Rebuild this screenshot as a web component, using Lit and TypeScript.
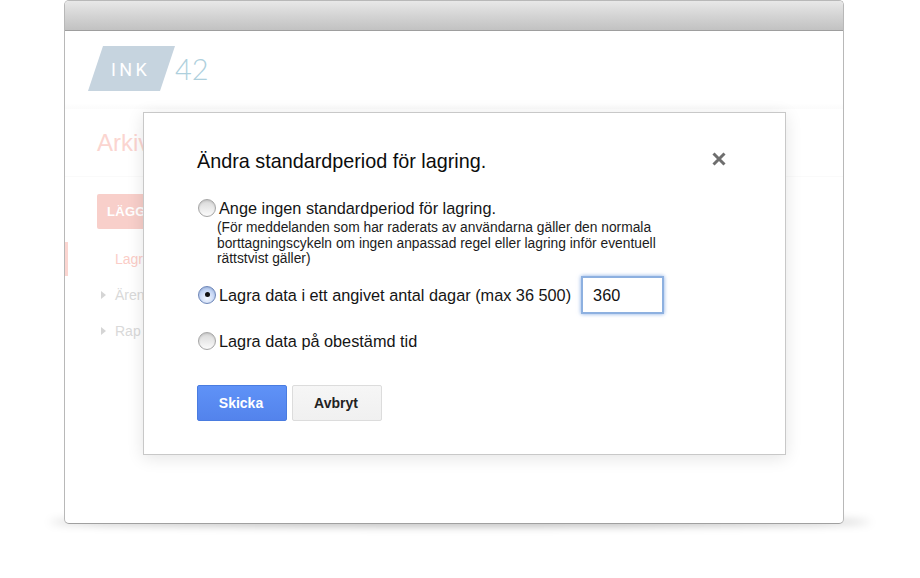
import { LitElement, html, css } from "lit";
import { customElement } from "lit/decorators.js";

@customElement("app-root")
export class AppRoot extends LitElement {
  static styles = css`
    :host { display: block; width: 920px; height: 578px; background: #fff; overflow: hidden; font-family: "Liberation Sans", Arial, sans-serif; color: #111; }
    .stage { position: relative; width: 920px; height: 578px; padding: 0 76px 0 64px; box-sizing: border-box; }
    .floor { position: absolute; left: 50px; right: 50px; top: 518px; height: 8px; border-radius: 50%; background: rgba(0,0,0,.3); filter: blur(4px); }
    .win { position: relative; height: 524px; box-sizing: border-box; background: #fff; border: 1px solid #b8b8b8; border-bottom-color: #a0a0a0; border-radius: 5px; overflow: hidden; display: flex; flex-direction: column; }
    .titlebar { height: 30px; flex: none; box-sizing: border-box; border-bottom: 1px solid #9e9e9e; background: linear-gradient(#e8e8e8, #d4d4d4 50%, #c2c2c2); }
    .header { height: 72px; flex: none; padding: 15px 0 0 23px; box-sizing: border-box; display: flex; align-items: flex-start; }
    .logo-box { width: 87px; height: 45px; background: #c6d4df; clip-path: polygon(15px 0, 100% 0, 72px 100%, 0 100%); display: flex; align-items: center; padding: 2px 0 0 23px; box-sizing: border-box; color: #fff; font: 400 18px Roboto, sans-serif; letter-spacing: 3.4px; }
    .logo-num { margin-top: 6px; color: #aed0dd; font: 300 29px/34px Lato, sans-serif; }
    .band { height: 6px; flex: none; background: linear-gradient(#fff, #fbfbfb); }
    .page { flex: 1; display: flex; flex-direction: column; }
    .page-title { height: 68px; flex: none; box-sizing: border-box; border-bottom: 1px solid #fafafa; padding: 20px 0 0 32px; font-size: 24px; line-height: 28px; color: #fbd5d0; }
    .add { margin: 17px 0 0 32px; width: 120px; height: 35px; border-radius: 2px; background: #f8cfca; color: #fff; font-size: 13px; font-weight: 700; line-height: 35px; padding-left: 10px; box-sizing: border-box; letter-spacing: .3px; }
    .nav { margin-top: 13px; display: flex; flex-direction: column; font-size: 14px; }
    .nav-item { height: 36px; line-height: 34px; display: flex; align-items: center; color: #d9d9d9; }
    .nav-item.on { height: 34px; margin-bottom: 1px; border-left: 3px solid #fbd5d0; color: #fbcdc7; padding-left: 47px; }
    .arrow { width: 0; height: 0; margin: 0 9px 0 36px; border-left: 5px solid #d5d5d5; border-top: 4px solid transparent; border-bottom: 4px solid transparent; }
    .modal { position: absolute; left: 143px; top: 112px; width: 643px; height: 343px; box-sizing: border-box; background: #fff; border: 1px solid #c8c8c8; box-shadow: 0 3px 16px rgba(0,0,0,.11); padding: 37px 53px 0; }
    .close { position: absolute; left: 567px; top: 38px; width: 16px; height: 16px; display: block; }
    h1 { margin: 0 0 26px; font-size: 19.8px; font-weight: 400; line-height: 22px; color: #0c0c0c; }
    .opt { display: flex; align-items: center; gap: 3px; font-size: 16.3px; line-height: 20px; color: #151515; height: 20px; margin-left: 1px; }
    .radio { width: 18px; height: 18px; flex: none; box-sizing: border-box; border-radius: 50%; border: 1px solid #a5a5a5; background: linear-gradient(#d8d8d8, #fbfbfb); box-shadow: inset 0 1px 2px rgba(0,0,0,.12); display: flex; align-items: center; justify-content: center; }
    .radio.on { border-color: #6d86b8; background: radial-gradient(circle at 50% 70%, #f4f8ff, #a9c2ef 90%); }
    .dot { width: 5px; height: 5px; border-radius: 50%; background: #111; }
    .note { margin: 2px 0 0 20px; font-size: 13.8px; line-height: 15.5px; color: #1c1c1c; width: 470px; }
    .row2 { margin-top: 9px; height: 38px; }
    .row3 { margin-top: 17px; }
    .input { width: 83px; height: 38px; margin-left: 7px; box-sizing: border-box; border: 2px solid #8db0e0; box-shadow: 0 0 4px rgba(90,140,220,.75); padding-left: 10px; font-size: 16.3px; line-height: 34px; color: #111; background: #fff; }
    .actions { display: flex; gap: 5px; margin-top: 34px; }
    .btn { width: 90px; height: 36px; box-sizing: border-box; border-radius: 2px; font-size: 14px; font-weight: 700; line-height: 34px; text-align: center; padding-right: 2px; }
    .primary { background: linear-gradient(#5f92f7, #5383ec); border: 1px solid #4a7ce0; color: #fff; }
    .secondary { background: linear-gradient(#f6f6f6, #f0f0f0); border: 1px solid #dcdcdc; color: #222; }
  `;

  render() {
    return html`
      <div class="stage">
        <div class="floor"></div>
        <div class="win">
          <div class="titlebar"></div>
          <div class="header">
            <div class="logo-box">INK</div>
            <div class="logo-num">42</div>
          </div>
          <div class="band"></div>
          <div class="page">
            <div class="page-title">Arkiv</div>
            <div class="add">LÄGG</div>
            <div class="nav">
              <div class="nav-item on">Lagr</div>
              <div class="nav-item"><span class="arrow"></span>Ären</div>
              <div class="nav-item"><span class="arrow"></span>Rap</div>
            </div>
          </div>
        </div>
        <div class="modal">
          <svg class="close" viewBox="0 0 16 16"><path d="M2.5 2.5 13.5 13.5M13.5 2.5 2.5 13.5" stroke="#6e6e6e" stroke-width="3" fill="none"/></svg>
          <h1>Ändra standardperiod för lagring.</h1>
          <div class="opt"><span class="radio"></span>Ange ingen standardperiod för lagring.</div>
          <div class="note">(För meddelanden som har raderats av användarna gäller den normala borttagningscykeln om ingen anpassad regel eller lagring inför eventuell rättstvist gäller)</div>
          <div class="opt row2"><span class="radio on"><span class="dot"></span></span>Lagra data i ett angivet antal dagar (max 36 500)<span class="input">360</span></div>
          <div class="opt row3"><span class="radio"></span>Lagra data på obestämd tid</div>
          <div class="actions">
            <div class="btn primary">Skicka</div>
            <div class="btn secondary">Avbryt</div>
          </div>
        </div>
      </div>
    `;
  }
}
